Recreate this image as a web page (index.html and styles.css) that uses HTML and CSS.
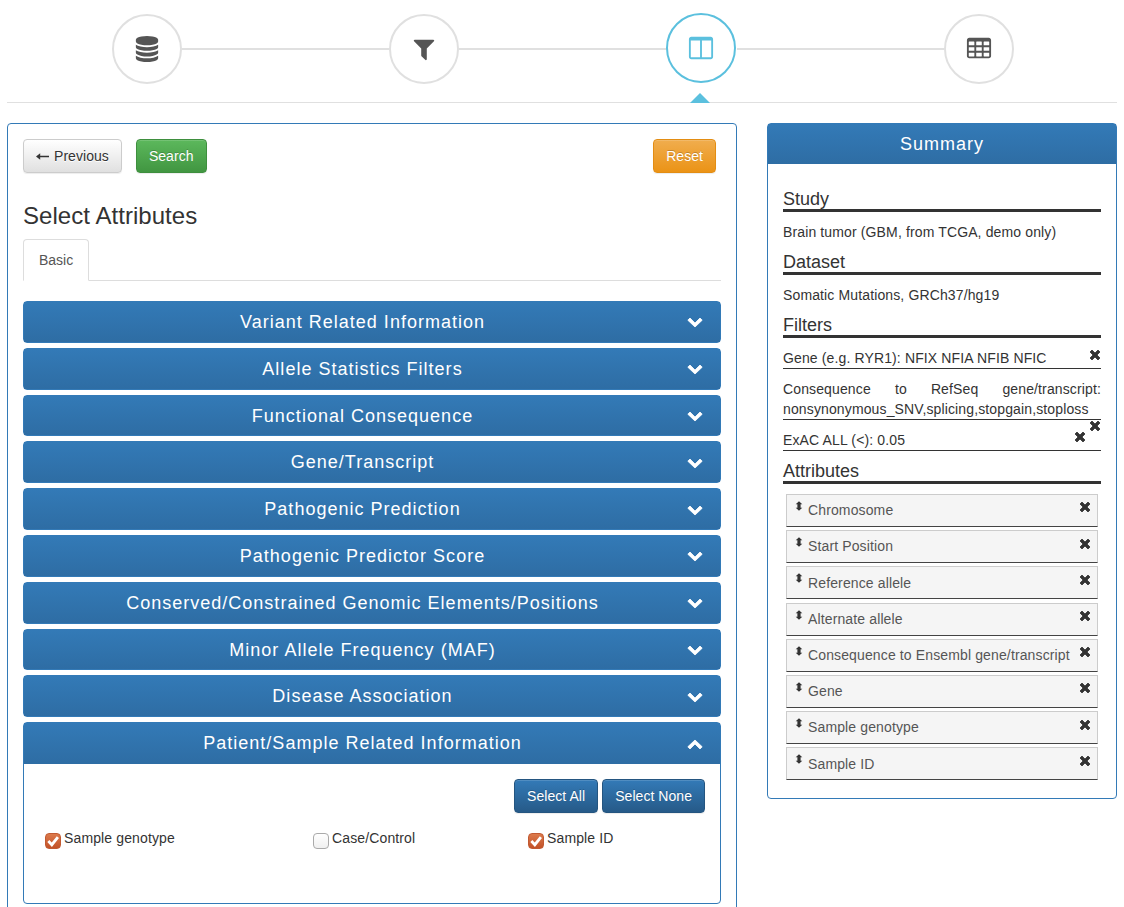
FILE: index.html
```html
<!doctype html>
<html>
  <head>
    <meta charset="utf-8">
    <title>Select Attributes</title>
    <link rel="stylesheet" href="styles.css">
  </head>
  <body>

    <svg class="defs" xmlns="http://www.w3.org/2000/svg">
      <symbol id="i-database" viewBox="0 0 1792 1792"><path d="M896 768q237 0 443-43t325-127v170q0 69-103 128t-280 93.5-385 34.5-385-34.5-280-93.5-103-128v-170q119 84 325 127t443 43zm0 768q237 0 443-43t325-127v170q0 69-103 128t-280 93.5-385 34.5-385-34.5-280-93.5-103-128v-170q119 84 325 127t443 43zm0-384q237 0 443-43t325-127v170q0 69-103 128t-280 93.5-385 34.5-385-34.5-280-93.5-103-128v-170q119 84 325 127t443 43zm0-1152q208 0 385 34.5t280 93.5 103 128v128q0 69-103 128t-280 93.5-385 34.5-385-34.5-280-93.5-103-128v-128q0-69 103-128t280-93.5 385-34.5z"/></symbol>
      <symbol id="i-filter" viewBox="0 0 1792 1792"><path d="M1595 295q17 41-14 70l-493 493v742q0 42-39 59-13 5-25 5-27 0-45-19l-256-256q-19-19-19-45v-486l-493-493q-31-29-14-70 17-39 59-39h1280q42 0 59 39z"/></symbol>
      <symbol id="i-columns" viewBox="0 0 1792 1792"><path d="M224 1536h608v-1152h-640v1120q0 13 9.5 22.5t22.5 9.5zm1376-32v-1120h-640v1152h608q13 0 22.5-9.5t9.5-22.5zm128-1216v1216q0 66-47 113t-113 47h-1344q-66 0-113-47t-47-113v-1216q0-66 47-113t113-47h1344q66 0 113 47t47 113z"/></symbol>
      <symbol id="i-table" viewBox="0 0 1792 1792"><path d="M576 1376v-192q0-14-9-23t-23-9h-320q-14 0-23 9t-9 23v192q0 14 9 23t23 9h320q14 0 23-9t9-23zm0-384v-192q0-14-9-23t-23-9h-320q-14 0-23 9t-9 23v192q0 14 9 23t23 9h320q14 0 23-9t9-23zm512 384v-192q0-14-9-23t-23-9h-320q-14 0-23 9t-9 23v192q0 14 9 23t23 9h320q14 0 23-9t9-23zm-512-768v-192q0-14-9-23t-23-9h-320q-14 0-23 9t-9 23v192q0 14 9 23t23 9h320q14 0 23-9t9-23zm512 384v-192q0-14-9-23t-23-9h-320q-14 0-23 9t-9 23v192q0 14 9 23t23 9h320q14 0 23-9t9-23zm512 384v-192q0-14-9-23t-23-9h-320q-14 0-23 9t-9 23v192q0 14 9 23t23 9h320q14 0 23-9t9-23zm-512-768v-192q0-14-9-23t-23-9h-320q-14 0-23 9t-9 23v192q0 14 9 23t23 9h320q14 0 23-9t9-23zm512 384v-192q0-14-9-23t-23-9h-320q-14 0-23 9t-9 23v192q0 14 9 23t23 9h320q14 0 23-9t9-23zm0-384v-192q0-14-9-23t-23-9h-320q-14 0-23 9t-9 23v192q0 14 9 23t23 9h320q14 0 23-9t9-23zm128-320v1088q0 66-47 113t-113 47h-1344q-66 0-113-47t-47-113v-1088q0-66 47-113t113-47h1344q66 0 113 47t47 113z"/></symbol>
      <symbol id="i-down" viewBox="0 0 16 11"><path d="M.8 3.2L3 1l5 5 5-5 2.2 2.200L8 10z" fill="#fff" stroke="#fff" stroke-width=".8" stroke-linejoin="round"/></symbol>
      <symbol id="i-up" viewBox="0 0 16 11"><path d="M.8 7.800L3 10l5-5 5 5 2.200-2.200L8 1z" fill="#fff" stroke="#fff" stroke-width=".8" stroke-linejoin="round"/></symbol>
      <symbol id="i-remove" viewBox="0 0 12 12"><path d="M3 1l3 3 3-3 2 2-3 3 3 3-2 2-3-3-3 3-2-2 3-3-3-3z" stroke-width=".8" stroke-linejoin="round"/></symbol>
      <symbol id="i-sort" viewBox="0 0 8 10"><path d="M4 .3l3.300 3H5.600v3.400h1.700l-3.300 3-3.300-3h1.700V3.300H.7z"/></symbol>
      <symbol id="i-check" viewBox="0 0 12 12"><path d="M2 6l3 3.200L10.200 2.600" fill="none" stroke="#fff" stroke-width="2.400"/></symbol>
      <symbol id="i-back" viewBox="0 0 13 9"><path d="M13 3.700v1.500H4.200v2.600L0 4.500l4.200-3.300v2.500z"/></symbol>
    </svg>

    <nav class="steps">
      <div class="step"><svg class="step-icon"><use href="#i-database"/></svg></div>
      <div class="step-line"></div>
      <div class="step"><svg class="step-icon nudge-left"><use href="#i-filter"/></svg></div>
      <div class="step-line"></div>
      <div class="step active"><svg class="step-icon"><use href="#i-columns"/></svg></div>
      <div class="step-line"></div>
      <div class="step"><svg class="step-icon nudge-right"><use href="#i-table"/></svg></div>
    </nav>

    <main class="page">
      <section class="box">
        <div class="toolbar">
          <button class="btn btn-default"><svg class="back"><use href="#i-back"/></svg>Previous</button>
          <button class="btn btn-success">Search</button>
          <button class="btn btn-warning reset">Reset</button>
        </div>

        <h3 class="title">Select Attributes</h3>

        <div class="tabs"><a class="tab">Basic</a></div>

        <div class="accordion">
          <div class="group">
            <div class="group-head"><h4>Variant Related Information</h4><svg class="chev"><use href="#i-down"/></svg></div>
          </div>
          <div class="group">
            <div class="group-head"><h4>Allele Statistics Filters</h4><svg class="chev"><use href="#i-down"/></svg></div>
          </div>
          <div class="group">
            <div class="group-head"><h4>Functional Consequence</h4><svg class="chev"><use href="#i-down"/></svg></div>
          </div>
          <div class="group">
            <div class="group-head"><h4>Gene/Transcript</h4><svg class="chev"><use href="#i-down"/></svg></div>
          </div>
          <div class="group">
            <div class="group-head"><h4>Pathogenic Prediction</h4><svg class="chev"><use href="#i-down"/></svg></div>
          </div>
          <div class="group">
            <div class="group-head"><h4>Pathogenic Predictor Score</h4><svg class="chev"><use href="#i-down"/></svg></div>
          </div>
          <div class="group">
            <div class="group-head"><h4>Conserved/Constrained Genomic Elements/Positions</h4><svg class="chev"><use href="#i-down"/></svg></div>
          </div>
          <div class="group">
            <div class="group-head"><h4>Minor Allele Frequency (MAF)</h4><svg class="chev"><use href="#i-down"/></svg></div>
          </div>
          <div class="group">
            <div class="group-head"><h4>Disease Association</h4><svg class="chev"><use href="#i-down"/></svg></div>
          </div>
          <div class="group open">
            <div class="group-head"><h4>Patient/Sample Related Information</h4><svg class="chev"><use href="#i-up"/></svg></div>
            <div class="group-body">
              <div class="select-btns">
                <button class="btn btn-primary">Select All</button>
                <button class="btn btn-primary">Select None</button>
              </div>
              <div class="checks">
                <label class="check"><span class="tick on"><svg><use href="#i-check"/></svg></span>Sample genotype</label>
                <label class="check"><span class="tick"></span>Case/Control</label>
                <label class="check"><span class="tick on"><svg><use href="#i-check"/></svg></span>Sample ID</label>
              </div>
            </div>
          </div>
        </div>
      </section>

      <aside class="summary">
        <div class="summary-head">Summary</div>
        <div class="summary-body">
          <h4>Study</h4>
          <p>Brain tumor (GBM, from TCGA, demo only)</p>
          <h4>Dataset</h4>
          <p>Somatic Mutations, GRCh37/hg19</p>
          <h4>Filters</h4>
          <div class="filter">Gene (e.g. RYR1): NFIX NFIA NFIB NFIC<svg class="x"><use href="#i-remove"/></svg></div>
          <div class="filter">Consequence to RefSeq gene/transcript: nonsynonymous_SNV,splicing,stopgain,stoploss<svg class="x"><use href="#i-remove"/></svg></div>
          <div class="filter">ExAC ALL (&lt;): 0.05<svg class="x"><use href="#i-remove"/></svg></div>
          <h4>Attributes</h4>
          <ul class="attrs">
            <li><svg class="sort"><use href="#i-sort"/></svg><span>Chromosome</span><svg class="x"><use href="#i-remove"/></svg></li>
            <li><svg class="sort"><use href="#i-sort"/></svg><span>Start Position</span><svg class="x"><use href="#i-remove"/></svg></li>
            <li><svg class="sort"><use href="#i-sort"/></svg><span>Reference allele</span><svg class="x"><use href="#i-remove"/></svg></li>
            <li><svg class="sort"><use href="#i-sort"/></svg><span>Alternate allele</span><svg class="x"><use href="#i-remove"/></svg></li>
            <li><svg class="sort"><use href="#i-sort"/></svg><span>Consequence to Ensembl gene/transcript</span><svg class="x"><use href="#i-remove"/></svg></li>
            <li><svg class="sort"><use href="#i-sort"/></svg><span>Gene</span><svg class="x"><use href="#i-remove"/></svg></li>
            <li><svg class="sort"><use href="#i-sort"/></svg><span>Sample genotype</span><svg class="x"><use href="#i-remove"/></svg></li>
            <li><svg class="sort"><use href="#i-sort"/></svg><span>Sample ID</span><svg class="x"><use href="#i-remove"/></svg></li>
          </ul>
        </div>
      </aside>
    </main>

  </body>
</html>
```

FILE: styles.css
```css
* {
  box-sizing: border-box;
}
html, body {
  margin: 0;
  height: 100%;
  overflow: hidden;
  background: #fff;
  color: #333;
  font-family: "Liberation Sans", Arial, sans-serif;
  font-size: 14px;
  line-height: 20px;
  letter-spacing: .13px;
}
.defs {
  display: none;
}

/* wizard */
.steps {
  display: flex;
  align-items: center;
  height: 103px;
  margin: 0 7px;
  padding: 0 103px 5px 105px;
  border-bottom: 1px solid #e0e0e0;
}
.step {
  position: relative;
  display: flex;
  align-items: center;
  justify-content: center;
  flex: none;
  width: 70px;
  height: 70px;
  border: 2px solid #e0e0e0;
  border-radius: 50%;
  color: #555;
}
.step.active {
  top: -1px;
  left: -1px;
  border-color: #5bc0de;
  color: #5bc0de;
}
.step.active::after {
  content: "";
  position: absolute;
  left: 22px;
  top: 78px;
  border: 10px solid transparent;
  border-top: 0;
  border-bottom-color: #5bc0de;
}
.step-icon {
  width: 26px;
  height: 26px;
  fill: currentColor;
}
.nudge-left {
  margin-right: 1px;
}
.nudge-right {
  margin-left: 1px;
}
.step-line {
  flex: 1;
  height: 2px;
  background: #e0e0e0;
}

/* page */
.page {
  display: flex;
  align-items: flex-start;
  gap: 30px;
  margin: 20px 7px 0;
}
.box {
  flex: none;
  width: 730px;
  padding: 15px;
  border: 1px solid #337ab7;
  border-radius: 4px;
}
.toolbar {
  display: flex;
  gap: 14px;
  padding-right: 5px;
}
.reset {
  margin-left: auto;
}
.btn {
  height: 34px;
  padding: 6px 12px;
  border: 1px solid #ccc;
  border-radius: 4px;
  font: inherit;
  letter-spacing: .05px;
  text-shadow: 0 -1px 0 rgba(0,0,0,.2);
  box-shadow: inset 0 1px 0 rgba(255,255,255,.15), 0 1px 1px rgba(0,0,0,.075);
  color: #fff;
}
.btn-default {
  color: #333;
  border-color: #ccc;
  text-shadow: 0 1px 0 #fff;
  background: linear-gradient(#fff, #e0e0e0);
}
.back {
  width: 13px;
  height: 9px;
  margin-right: 5px;
  fill: #333;
}
.btn-success {
  border-color: #3e8f3e;
  background: linear-gradient(#5cb85c, #419641);
}
.btn-warning {
  border-color: #e38d13;
  background: linear-gradient(#f0ad4e, #eb9316);
}
.btn-primary {
  border-color: #245580;
  background: linear-gradient(#337ab7, #265a88);
}
.title {
  margin: 30px 0 10px;
  font-size: 24px;
  font-weight: normal;
  line-height: 26px;
  letter-spacing: .05px;
}
.tabs {
  display: flex;
  border-bottom: 1px solid #ddd;
  margin-bottom: 20px;
}
.tab {
  margin-bottom: -1px;
  padding: 10px 15px;
  border: 1px solid #ddd;
  border-bottom-color: #fff;
  border-radius: 4px 4px 0 0;
  background: #fff;
  color: #555;
  letter-spacing: 0;
}

/* accordion */
.group {
  margin-top: 5px;
  border: 1px solid #337ab7;
  border-radius: 4px;
}
.group:first-child {
  margin-top: 0;
}
.group-head {
  display: flex;
  align-items: center;
  padding: 11px 15px 9px;
  background: linear-gradient(#337ab7, #2e6da4);
  color: #fff;
}
.group-head h4 {
  flex: 1;
  margin: 0;
  font-size: 18px;
  font-weight: normal;
  line-height: 19.8px;
  letter-spacing: 1.01px;
  text-align: center;
}
.chev {
  flex: none;
  width: 16px;
  height: 11px;
  margin: 0 2px 0 1px;
}
.group-body {
  height: 140px;
  padding: 15px;
  border-top: 1px solid #2e6da4;
}
.select-btns {
  display: flex;
  justify-content: flex-end;
  gap: 4px;
}
.checks {
  display: grid;
  grid-template-columns: 268px 215px 1fr;
  margin: 15px 0 0 6px;
}
.check {
  display: flex;
  align-items: flex-start;
}
.tick {
  display: flex;
  flex: none;
  width: 16px;
  height: 16px;
  margin: 5px 3px 0 0;
  border: 1px solid #aaa;
  border-radius: 4px;
  background: linear-gradient(#fff, #f0f0f0);
}
.tick.on {
  border-color: #c25a32;
  background: linear-gradient(#dc7a4c, #c25228);
}
.tick svg {
  width: 14px;
  height: 14px;
}

/* summary */
.summary {
  flex: none;
  width: 350px;
  border: 1px solid #337ab7;
  border-radius: 4px;
}
.summary-head {
  height: 40px;
  padding: 10px 15px;
  background: linear-gradient(#337ab7, #2e6da4);
  color: #fff;
  font-size: 18px;
  line-height: 20px;
  letter-spacing: 1px;
  text-align: center;
}
.summary-body {
  padding: 15px 15px 17.6px;
}
.summary-body h4 {
  margin: 10px 0;
  border-bottom: 3px solid #333;
  font-size: 18px;
  font-weight: normal;
  line-height: 20px;
  letter-spacing: 0;
}
.summary-body p {
  margin: 0;
}
.filter {
  margin-bottom: 10px;
  border-bottom: 1px solid #333;
  text-align: justify;
}
.x {
  width: 12px;
  height: 12px;
  fill: #333;
  stroke: #333;
}
.filter .x {
  float: right;
  box-sizing: content-box;
  padding-left: 3px;
  margin-top: 1px;
}
.attrs {
  margin: 0;
  padding: 0 3px;
  list-style: none;
}
.attrs li {
  display: flex;
  align-items: flex-start;
  height: 33px;
  margin-bottom: 3.2px;
  padding: 5.3px 6px 0 8px;
  border: 1px solid #ccc;
  border-bottom-color: #444;
  background: #f5f5f5;
  color: #555;
}
.attrs li:last-child {
  margin-bottom: 0;
}
.attrs span {
  flex: 1;
}
.sort {
  flex: none;
  width: 8px;
  height: 10px;
  margin: .7px 5px 0 0;
  fill: #333;
}
.attrs .x {
  flex: none;
  margin-top: 1.2px;
}
```
